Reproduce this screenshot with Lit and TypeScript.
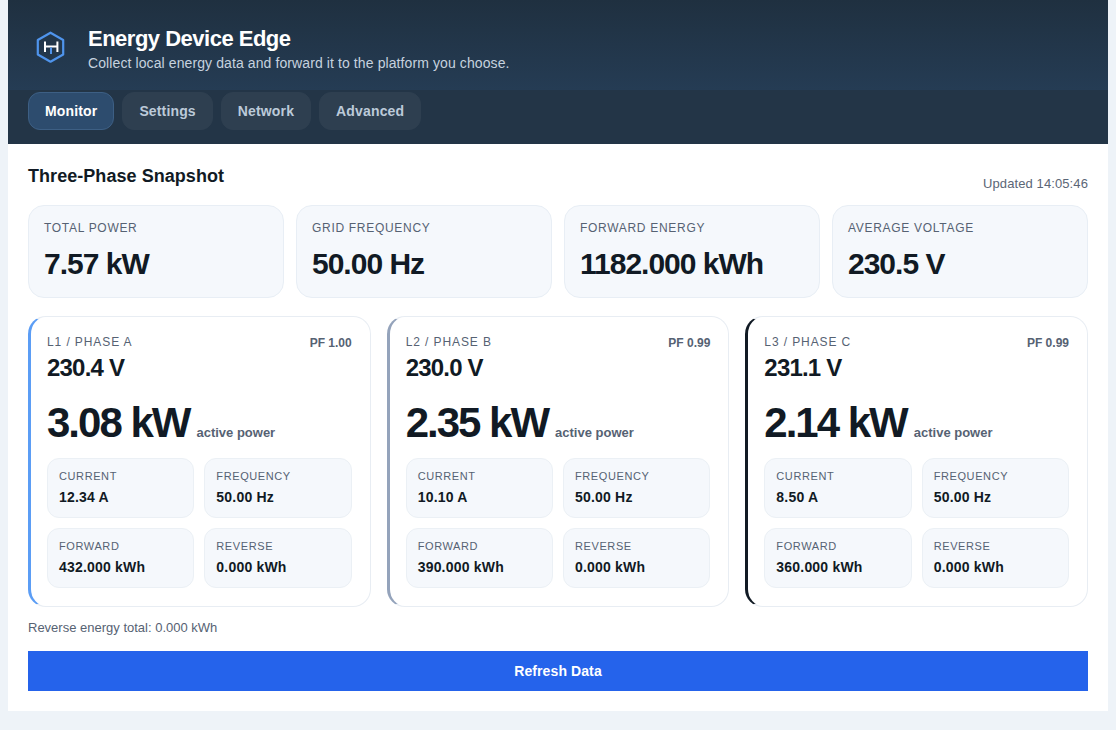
import { LitElement, html, css } from "lit";
import { customElement } from "lit/decorators.js";

const stats = [
  ["TOTAL POWER", "7.57 kW"],
  ["GRID FREQUENCY", "50.00 Hz"],
  ["FORWARD ENERGY", "1182.000 kWh"],
  ["AVERAGE VOLTAGE", "230.5 V"],
];
const phases = [
  { name: "L1 / PHASE A", pf: "PF 1.00", v: "230.4 V", p: "3.08 kW", cur: "12.34 A", fwd: "432.000 kWh", cls: "a" },
  { name: "L2 / PHASE B", pf: "PF 0.99", v: "230.0 V", p: "2.35 kW", cur: "10.10 A", fwd: "390.000 kWh", cls: "b" },
  { name: "L3 / PHASE C", pf: "PF 0.99", v: "231.1 V", p: "2.14 kW", cur: "8.50 A", fwd: "360.000 kWh", cls: "c" },
];

@customElement("app-root")
export class AppRoot extends LitElement {
  static styles = css`
    :host { display: block; min-height: 730px; background: #eef3f8; font-family: "Liberation Sans", Arial, sans-serif; color: #111a24; box-sizing: border-box; padding: 0 8px 19px; }
    * { box-sizing: border-box; }
    .shell { background: #fff; }
    .hero { height: 90px; background: linear-gradient(180deg, #1f3040, #253c54); display: flex; align-items: center; padding: 0 20px; gap: 14px; }
    .logo { width: 46px; height: 46px; display: block; flex: none; margin-top: 4px; }
    .hero-text { display: flex; flex-direction: column; gap: 3px; padding-top: 7px; }
    h1 { margin: 0; font-size: 22px; line-height: 26px; font-weight: 700; color: #fff; letter-spacing: -0.5px; }
    .sub { font-size: 14px; line-height: 17px; color: #c6d2df; letter-spacing: 0.1px; }
    nav { height: 54px; background: #233547; padding: 2px 20px 0; display: flex; gap: 8px; }
    .tab { height: 38px; padding: 0 16px; border-radius: 12px; background: #2e3f50; color: #bccad9; font-size: 14px; font-weight: 700; display: flex; align-items: center; border: 1px solid #2e3f50; letter-spacing: 0.15px; }
    .tab.on { background: #2d4c6e; color: #fff; border-color: #3d5f84; }
    main { padding: 20px; }
    .head { display: flex; justify-content: space-between; align-items: flex-start; height: 41px; }
    h2 { margin: 0; font-size: 18px; line-height: 24px; font-weight: 700; letter-spacing: 0.05px; }
    .updated { font-size: 13px; line-height: 16px; color: #5b6676; margin-top: 12px; letter-spacing: 0.1px; }
    .stats { display: grid; grid-template-columns: repeat(4, 1fr); gap: 12px; }
    .stat { height: 93px; border: 1px solid #e8eef5; border-radius: 16px; background: #f5f8fc; padding: 14px 15px; }
    .stat-l { font-size: 12px; line-height: 16px; letter-spacing: 0.7px; color: #566273; }
    .stat-v { font-size: 30px; line-height: 36px; font-weight: 700; margin-top: 10px; letter-spacing: -1px; }
    .phases { display: grid; grid-template-columns: repeat(3, 1fr); gap: 16px; margin-top: 18px; }
    .phase { height: 291px; border: 1px solid #e8edf3; border-left: 3px solid; border-radius: 18px; padding: 17px 18px 0 16px; background: #fff; }
    .phase.a { border-left-color: #5b9df5; }
    .phase.b { border-left-color: #94a3bb; }
    .phase.c { border-left-color: #111a24; }
    .top { display: flex; justify-content: space-between; }
    .name { font-size: 12px; line-height: 16px; letter-spacing: 0.9px; color: #566273; }
    .pf { font-size: 12px; line-height: 16px; font-weight: 700; color: #566273; margin-top: 1px; }
    .volt { font-size: 24px; line-height: 28px; font-weight: 700; letter-spacing: -0.8px; margin-top: 3px; }
    .power { display: flex; align-items: baseline; gap: 7px; margin-top: 17px; height: 48px; }
    .power b { font-size: 42px; line-height: 48px; letter-spacing: -2px; }
    .power span { font-size: 13px; font-weight: 700; color: #566273; }
    .metrics { display: grid; grid-template-columns: 1fr 1fr; gap: 10px; margin-top: 11px; }
    .metric { height: 60px; background: #f5f8fc; border: 1px solid #ebf0f5; border-radius: 12px; padding: 10px 11px; }
    .m-l { font-size: 11px; line-height: 14px; letter-spacing: 0.6px; color: #566273; }
    .m-v { font-size: 14px; line-height: 18px; font-weight: 700; margin-top: 5px; letter-spacing: 0.2px; }
    .rev { font-size: 13px; line-height: 16px; color: #566273; margin-top: 13px; }
    button { display: block; width: 100%; height: 40px; margin-top: 15px; border: 0; background: #2563eb; color: #fff; font: 700 14px "Liberation Sans", Arial, sans-serif; letter-spacing: 0.1px; }
  `;

  render() {
    return html`
      <div class="shell">
        <header class="hero">
          <svg class="logo" viewBox="0 0 46 46" fill="none">
            <path d="M22.5 8.7 35.2 16V30.5L22.5 37.7 9.8 30.5V16Z" stroke="#4f94ec" stroke-width="2.2" stroke-linejoin="round"/>
            <path d="M17 17.5V28M29.4 17.5V28M17 22.5H29.4" stroke="#fff" stroke-width="2"/>
            <path d="M23 23.5V30" stroke="#4f94ec" stroke-width="2"/>
          </svg>
          <div class="hero-text">
            <h1>Energy Device Edge</h1>
            <div class="sub">Collect local energy data and forward it to the platform you choose.</div>
          </div>
        </header>
        <nav>
          <div class="tab on">Monitor</div>
          <div class="tab">Settings</div>
          <div class="tab">Network</div>
          <div class="tab">Advanced</div>
        </nav>
        <main>
          <div class="head">
            <h2>Three-Phase Snapshot</h2>
            <div class="updated">Updated 14:05:46</div>
          </div>
          <div class="stats">
            ${stats.map(([l, v]) => html`<div class="stat"><div class="stat-l">${l}</div><div class="stat-v">${v}</div></div>`)}
          </div>
          <div class="phases">
            ${phases.map((p) => html`
              <div class="phase ${p.cls}">
                <div class="top"><div class="name">${p.name}</div><div class="pf">${p.pf}</div></div>
                <div class="volt">${p.v}</div>
                <div class="power"><b>${p.p}</b><span>active power</span></div>
                <div class="metrics">
                  ${[["CURRENT", p.cur], ["FREQUENCY", "50.00 Hz"], ["FORWARD", p.fwd], ["REVERSE", "0.000 kWh"]].map(
                    ([l, v]) => html`<div class="metric"><div class="m-l">${l}</div><div class="m-v">${v}</div></div>`
                  )}
                </div>
              </div>`)}
          </div>
          <div class="rev">Reverse energy total: 0.000 kWh</div>
          <button>Refresh Data</button>
        </main>
      </div>
    `;
  }
}
